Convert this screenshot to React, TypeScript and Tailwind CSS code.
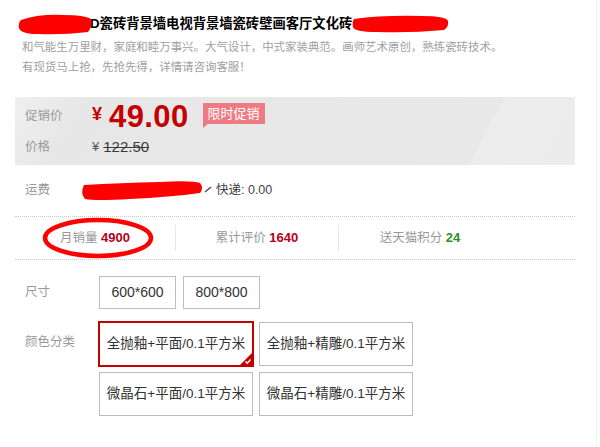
import React from "react";

const FONT = "font-['Liberation_Sans','Noto_Sans_CJK_SC',sans-serif]";

function Blob({ w, h, d }: { w: number; h: number; d: string }) {
  return (
    <svg width={w} height={h} viewBox={`0 0 ${w} ${h}`} className="shrink-0 block">
      <path d={d} fill="#ff0000" />
    </svg>
  );
}

function Btn({ children, cls, selected }: { children: React.ReactNode; cls: string; selected?: boolean }) {
  return (
    <div
      className={
        "relative flex items-center justify-center bg-white text-[#333] " +
        cls +
        (selected ? " border-2 border-[#c40000] -m-px box-content" : " border border-[#bdbdbd]")
      }
    >
      {children}
      {selected && (
        <svg width="12" height="12" viewBox="0 0 12 12" className="absolute right-0 bottom-0">
          <path d="M12 0 L12 12 L0 12 Z" fill="#c40000" />
          <path d="M5.5 8.5 L7.3 10.3 L10.5 6.5" stroke="#fff" strokeWidth="1.4" fill="none" />
        </svg>
      )}
    </div>
  );
}

export default function App() {
  return (
    <div className={"w-[597px] h-[447px] bg-white relative overflow-hidden border-r border-[#f1f1f1] " + FONT}>
      {/* Title */}
      <div className="pl-[18px] pt-[13px]">
        <div className="flex items-center h-[22px] text-[13.3px] font-bold text-black leading-[22px] whitespace-nowrap">
          <div className="relative z-10 -mr-[3px]">
            <Blob w={75} h={22} d="M3 7 Q 20 1 45 2 Q 66 2 73 6 Q 75 13 70 19 Q 45 22 20 21 Q 3 21 1 15 Q 0 10 3 7 Z" />
          </div>
          <span>D瓷砖背景墙电视背景墙瓷砖壁画客厅文化砖</span>
          <Blob w={97} h={18} d="M2 4 Q 30 0 70 1 Q 94 1 96 6 Q 97 12 92 15 Q 60 18 25 17 Q 2 17 1 12 Q 0 7 2 4 Z" />
        </div>
        <div className="mt-[2px] pl-[4px] text-[11.45px] leading-[20px] text-[#a0a0a0] whitespace-nowrap">
          <div>和气能生万里财，家庭和睦万事兴。大气设计，中式家装典范。画师艺术原创，熟练瓷砖技术。</div>
          <div>有现货马上抢，先抢先得，详情请咨询客服！</div>
        </div>
      </div>

      <div className="mx-[15px] w-[560px]">
        {/* Price box */}
        <div className="mt-[20px] h-[68px] pt-[3px] bg-[linear-gradient(118deg,#efefef_0%,#e7e7e7_12%,#e8e8e8_82%,#ededed_82.5%,#ececec_100%)]">
          <div className="flex items-center h-[32px]">
            <div className="w-[77px] pl-[10px] text-[12.5px] text-[#999]">促销价</div>
            <span className="text-[18px] font-bold text-[#c40000] mt-[-4px]">¥</span>
            <span className="ml-[7px] text-[31px] font-bold text-[#c40000] tracking-[0.4px] leading-none">49.00</span>
            <div className="relative ml-[14px] mt-[-6px] h-[21px] px-[5px] flex items-center bg-[#ee7a83] text-white text-[13px] leading-none">
              限时促销
              <svg width="6" height="5" viewBox="0 0 6 5" className="absolute left-0 -bottom-[4px]">
                <path d="M0 0 L6 0 L0 5 Z" fill="#ee7a83" />
              </svg>
            </div>
          </div>
          <div className="flex items-center h-[22px] mt-[4px]">
            <div className="w-[77px] pl-[10px] text-[12.5px] text-[#999]">价格</div>
            <span className="text-[13px] text-[#555]">¥</span>
            <span className="ml-[4px] text-[15px] text-[#3c3c3c] line-through">122.50</span>
          </div>
        </div>

        {/* Shipping */}
        <div className="mt-[13px] h-[24px] flex items-center text-[12.5px]">
          <div className="w-[65px] pl-[10px] text-[#999]">运费</div>
          <Blob w={124} h={21} d="M4 5 Q 40 3 80 2 Q 112 0 120 3 Q 124 8 120 13 Q 90 17 50 19 Q 15 21 5 19 Q 0 13 4 5 Z" />
          <svg width="8" height="8" viewBox="0 0 8 8" className="shrink-0">
            <path d="M1 6 L7 1" stroke="#444" strokeWidth="1.3" />
          </svg>
          <span className="ml-[4px] text-[#444]">快递: 0.00</span>
        </div>

        <div className="mt-[14px] border-t border-dotted border-[#c8c8c8]" />

        {/* Stats */}
        <div className="relative h-[42px] flex items-center text-[12.5px]">
          <div className="w-[160px] text-center">
            <span className="text-[#999]">月销量 </span>
            <span className="font-bold text-[#b5001a] text-[13px]">4900</span>
          </div>
          <div className="w-px h-[26px] bg-[#e6e6e6]" />
          <div className="w-[162px] text-center">
            <span className="text-[#999]">累计评价 </span>
            <span className="font-bold text-[#b5001a] text-[13px]">1640</span>
          </div>
          <div className="w-px h-[26px] bg-[#e6e6e6]" />
          <div className="w-[162px] text-center">
            <span className="text-[#999]">送天猫积分 </span>
            <span className="font-bold text-[#2d8f1e] text-[13px]">24</span>
          </div>
          <svg width="114" height="42" viewBox="0 0 114 42" className="absolute left-[27px] top-[0px]">
            <ellipse cx="56" cy="21" rx="53" ry="18" fill="none" stroke="#ff0000" strokeWidth="4.5" />
          </svg>
        </div>

        <div className="border-t border-dotted border-[#c8c8c8]" />

        {/* Size */}
        <div className="mt-[16px] flex items-center">
          <div className="w-[84px] pl-[10px] text-[12.5px] text-[#999]">尺寸</div>
          <div className="flex gap-[7px] text-[14px]">
            <Btn cls="w-[77px] h-[33px]">600*600</Btn>
            <Btn cls="w-[77px] h-[33px]">800*800</Btn>
          </div>
        </div>

        {/* Color */}
        <div className="mt-[13px] flex items-start">
          <div className="w-[84px] pl-[10px] pt-[10px] text-[12.5px] leading-[20px] text-[#999]">颜色分类</div>
          <div className="w-[320px] flex flex-wrap gap-x-[6px] gap-y-[6px] text-[13.5px]">
            <Btn cls="w-[152px] h-[42px]" selected>全抛釉+平面/0.1平方米</Btn>
            <Btn cls="w-[154px] h-[44px]">全抛釉+精雕/0.1平方米</Btn>
            <Btn cls="w-[154px] h-[44px]">微晶石+平面/0.1平方米</Btn>
            <Btn cls="w-[154px] h-[44px]">微晶石+精雕/0.1平方米</Btn>
          </div>
        </div>
      </div>
    </div>
  );
}
